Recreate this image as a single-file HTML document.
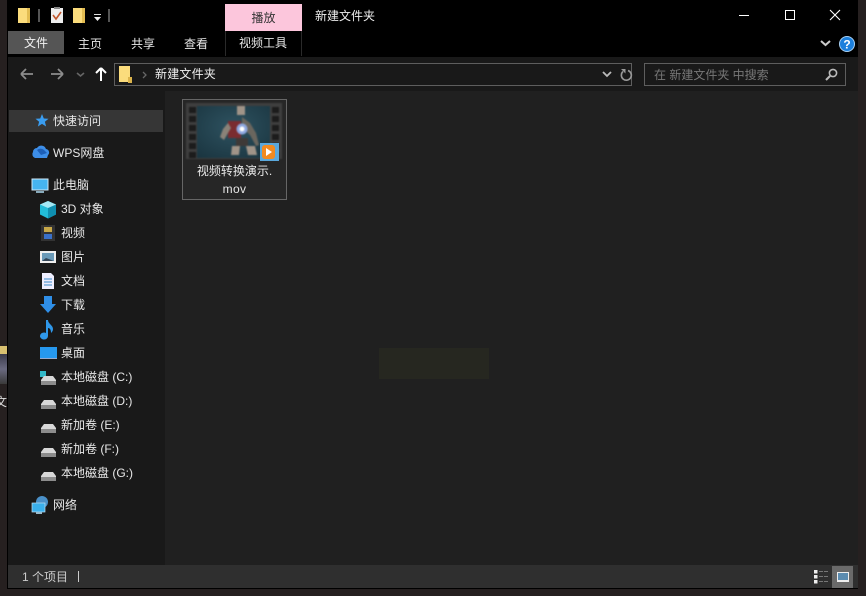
<!DOCTYPE html>
<html lang="zh">
<head>
<meta charset="utf-8">
<style>
html,body{margin:0;padding:0;width:866px;height:596px;overflow:hidden;background:#262020;}
body{position:relative;font-family:"Liberation Sans","Noto Sans CJK SC",sans-serif;font-size:12px;color:#e8e8e8;}
.a{position:absolute;}
.t{position:absolute;white-space:nowrap;line-height:16px;}
svg{position:absolute;overflow:visible;}
</style>
</head>
<body>
<div class="a" style="left:0;top:346px;width:7px;height:8px;background:#d8c070"></div>
<div class="a" style="left:0;top:354px;width:7px;height:30px;background:linear-gradient(#3a3a4a,#6a6a80 50%,#3a3a3a)"></div>
<div class="t" style="left:-5px;top:394px;color:#ddd">文件</div>

<div class="a" style="left:7px;top:0;width:851px;height:589px;background:#000"></div>

<!-- Title bar -->
<svg style="left:0;top:0" width="340" height="56">
<path d="M18 8h11v15h-11z" fill="#fbdc7c"/><path d="M27 8h3v15h-3z" fill="#e3bd52"/>
<rect x="38" y="9" width="2" height="13" fill="#555"/>
<rect x="51" y="8" width="12" height="15" fill="#eee"/><path d="M53 15l3 4 5-7" stroke="#c0562c" stroke-width="1.600" fill="none"/><rect x="54" y="7" width="6" height="2" fill="#888"/>
<path d="M73 8h11v15h-11z" fill="#fbdc7c"/><path d="M82 8h3v15h-3z" fill="#e3bd52"/>
<rect x="94" y="14" width="7" height="1" fill="#ddd"/><path d="M94 17h7l-3.500 4z" fill="#eee"/>
<rect x="108" y="9" width="2" height="13" fill="#555"/>
</svg>
<div class="a" style="left:225px;top:4px;width:77px;height:27px;background:#fcc6dc"></div>
<div class="t" style="left:225px;top:10px;width:77px;text-align:center;color:#333">播放</div>
<div class="t" style="left:315px;top:8px;color:#eee">新建文件夹</div>

<svg style="left:730px;top:5px" width="120" height="22">
<rect x="9" y="10" width="10" height="1" fill="#fff"/>
<rect x="55.500" y="5.500" width="9" height="9" fill="none" stroke="#fff"/>
<path d="M100 5l10 10M110 5l-10 10" stroke="#fff" stroke-width="1.100"/>
</svg>

<!-- Ribbon tabs -->
<div class="a" style="left:8px;top:31px;width:56px;height:23px;background:#555"></div>
<div class="t" style="left:8px;top:35px;width:56px;text-align:center;color:#f2f2f2">文件</div>
<div class="t" style="left:78px;top:36px">主页</div>
<div class="t" style="left:131px;top:36px">共享</div>
<div class="t" style="left:184px;top:36px">查看</div>
<div class="a" style="left:225px;top:31px;width:1px;height:25px;background:#2a2a2a"></div>
<div class="a" style="left:301px;top:31px;width:1px;height:25px;background:#2a2a2a"></div>
<div class="t" style="left:239px;top:35px">视频工具</div>
<svg style="left:815px;top:33px" width="40" height="22">
<path d="M6 8l4.500 4 4.500-4" stroke="#ccc" stroke-width="2" fill="none"/>
<circle cx="32" cy="11" r="7.500" fill="#1c7fdc" stroke="#a8d0f4"/>
<text x="32" y="15.500" font-size="12" font-weight="bold" fill="#fff" text-anchor="middle" font-family="Liberation Sans">?</text>
</svg>

<!-- Toolbar -->
<div class="a" style="left:8px;top:57px;width:850px;height:34px;background:#191919"></div>
<svg style="left:8px;top:57px" width="120" height="34">
<path d="M14 17h12M14 17l5-5M14 17l5 5" stroke="#8c8c8c" stroke-width="1.800" fill="none" transform="translate(-1 0)"/>
<path d="M43 17h12M55 17l-5-5M55 17l-5 5" stroke="#8c8c8c" stroke-width="1.800" fill="none"/>
<path d="M69 16l3.500 3 3.500-3" stroke="#666" stroke-width="1.600" fill="none"/>
<path d="M93 24v-13M93 11l-5 5M93 11l5 5" stroke="#fff" stroke-width="2" fill="none"/>
</svg>
<div class="a" style="left:114px;top:63px;width:518px;height:23px;border:1px solid #5e5e5e;box-sizing:border-box;background:#191919"></div>
<svg style="left:114px;top:63px" width="520" height="23">
<path d="M5 3h11v16h-11z" fill="#fbdc7c"/><path d="M14 14h4v6h-4z" fill="#dcb44c"/>
<path d="M29 9l3 3-3 3" stroke="#666" stroke-width="1.300" fill="none"/>
<path d="M489 9l4 4 4-4" stroke="#bbb" stroke-width="1.800" fill="none"/>
<path d="M514 7.500a5 5 0 1 1-5 1" stroke="#999" stroke-width="1.600" fill="none"/><path d="M507 6h4.500v4.500z" fill="#999"/>
</svg>
<div class="t" style="left:155px;top:66px;color:#eee;letter-spacing:.2px">新建文件夹</div>
<div class="a" style="left:644px;top:63px;width:202px;height:23px;border:1px solid #5e5e5e;box-sizing:border-box;background:#191919"></div>
<div class="t" style="left:654px;top:67px;color:#777">在 新建文件夹 中搜索</div>
<svg style="left:824px;top:67px" width="16" height="16">
<circle cx="9" cy="6" r="3.600" fill="none" stroke="#bbb" stroke-width="1.600"/><path d="M6 9l-4 4" stroke="#bbb" stroke-width="2"/>
</svg>

<!-- Sidebar and content -->
<div class="a" style="left:8px;top:91px;width:157px;height:474px;background:#191919"></div>
<div class="a" style="left:165px;top:91px;width:693px;height:474px;background:#202020"></div>
<div class="a" style="left:379px;top:348px;width:110px;height:31px;background:#262720"></div>
<div class="a" style="left:9px;top:110px;width:154px;height:22px;background:#363636"></div>

<svg style="left:0;top:100px" width="165" height="420">
<path d="M42 14l1.800 4.500 4.700.3-3.600 3 1.200 4.700-4.100-2.600-4.100 2.600 1.200-4.700-3.600-3 4.700-.3z" fill="#3a9df0"/>
<path d="M33 52a4 4 0 0 1 4-4 5 5 0 0 1 9 1 3.500 3.500 0 0 1 2 6l-1 3h-12a4 4 0 0 1-2-6z" fill="#3d8ee8"/>
<path d="M37 50a5 5 0 0 1 7 0l3 3-6 2z" fill="#1c5fb8"/>
<rect x="32" y="79" width="16" height="11" fill="#46b4f0" stroke="#cfe8f8"/><rect x="36" y="91" width="8" height="2" fill="#8ab"/>
<path d="M48 101l8 3.500v10l-8 4-8-4v-10z" fill="#22bcd8"/><path d="M48 108l8-3.500v10l-8 4z" fill="#0f8fb0"/><path d="M48 101l8 3.500-8 3.500-8-3.500z" fill="#a4e8f4"/>
<rect x="41" y="125" width="14" height="16" fill="#333"/><rect x="44" y="127" width="8" height="5" fill="#c8a848"/><rect x="44" y="134" width="8" height="5" fill="#3a70c8"/>
<rect x="40" y="151" width="16" height="12" fill="#eee"/><rect x="42" y="153" width="12" height="8" fill="#6a9ab8"/><path d="M42 161l4-3 8 3z" fill="#345"/>
<path d="M42 173h9l3 3v13h-12z" fill="#eef"/><path d="M44 179h8M44 182h8M44 185h8" stroke="#3a8ac8"/>
<path d="M44 196h8v8h4l-8 9-8-9h4z" fill="#2f8fe8"/>
<path d="M48 220c0 4 5 5 5 9 0 2-1 3-2 4 0-3-1-5-3-5v8a4 3.500 0 1 1-2-3v-13z" fill="#2f98ea"/>
<rect x="40" y="247" width="17" height="11" fill="#2698ee"/><rect x="40" y="258" width="17" height="1" fill="#9ac"/>
<g>
<rect x="40" y="271" width="6" height="6" fill="#32b8c8"/>
<path d="M44 276h9l3 4v5h-15v-5z" fill="#d8d8d8"/><rect x="41" y="281" width="15" height="4" fill="#8c8c8c"/>
<path d="M44 300h9l3 4v5h-15v-5z" fill="#d8d8d8"/><rect x="41" y="305" width="15" height="4" fill="#8c8c8c"/>
<path d="M44 324h9l3 4v5h-15v-5z" fill="#d8d8d8"/><rect x="41" y="329" width="15" height="4" fill="#8c8c8c"/>
<path d="M44 348h9l3 4v5h-15v-5z" fill="#d8d8d8"/><rect x="41" y="353" width="15" height="4" fill="#8c8c8c"/>
<path d="M44 372h9l3 4v5h-15v-5z" fill="#d8d8d8"/><rect x="41" y="377" width="15" height="4" fill="#8c8c8c"/>
</g>
<circle cx="42" cy="402" r="6" fill="#4a90c8"/><rect x="32" y="403" width="13" height="9" fill="#3ab0ec" stroke="#bfe0f4" stroke-width=".7"/><rect x="36" y="412" width="6" height="2" fill="#9bc"/>
</svg>

<div class="t" style="left:53px;top:113px">快速访问</div>
<div class="t" style="left:53px;top:145px">WPS网盘</div>
<div class="t" style="left:53px;top:177px">此电脑</div>
<div class="t" style="left:61px;top:201px">3D 对象</div>
<div class="t" style="left:61px;top:225px">视频</div>
<div class="t" style="left:61px;top:249px">图片</div>
<div class="t" style="left:61px;top:273px">文档</div>
<div class="t" style="left:61px;top:297px">下载</div>
<div class="t" style="left:61px;top:321px">音乐</div>
<div class="t" style="left:61px;top:345px">桌面</div>
<div class="t" style="left:61px;top:369px">本地磁盘 (C:)</div>
<div class="t" style="left:61px;top:393px">本地磁盘 (D:)</div>
<div class="t" style="left:61px;top:417px">新加卷 (E:)</div>
<div class="t" style="left:61px;top:441px">新加卷 (F:)</div>
<div class="t" style="left:61px;top:465px">本地磁盘 (G:)</div>
<div class="t" style="left:53px;top:497px">网络</div>

<!-- File item -->
<div class="a" style="left:182px;top:99px;width:105px;height:101px;border:1px solid #666;box-sizing:border-box;background:#262626"></div>
<svg style="left:186px;top:103px;filter:blur(.7px)" width="96" height="60">
<defs>
<radialGradient id="g" cx="50%" cy="40%" r="75%"><stop offset="0" stop-color="#2e5260"/><stop offset="1" stop-color="#1a3540"/></radialGradient>
</defs>
<rect x="0" y="0" width="96" height="56" fill="#3e3e3e"/>
<rect x="11" y="3" width="73" height="52" fill="url(#g)"/>
<g fill="#1c1c1c">
<rect x="3" y="4" width="7" height="6"/><rect x="3" y="13" width="7" height="6"/><rect x="3" y="22" width="7" height="6"/><rect x="3" y="31" width="7" height="6"/><rect x="3" y="40" width="7" height="6"/><rect x="3" y="49" width="7" height="6"/>
<rect x="86" y="4" width="7" height="6"/><rect x="86" y="13" width="7" height="6"/><rect x="86" y="22" width="7" height="6"/><rect x="86" y="31" width="7" height="6"/><rect x="86" y="40" width="7" height="6"/><rect x="86" y="49" width="7" height="6"/>
</g>
<rect x="51" y="3" width="8" height="9" fill="#a09488"/>
<path d="M42 18h13v17h-13z" fill="#7a2c30"/>
<path d="M56 14l8 6 6 10 3 12-3 1-6-11-8-8z" fill="#6a665e"/>
<path d="M42 20l-5 6-3 8 4 3 4-7 3-5z" fill="#8a8278"/>
<circle cx="56" cy="26" r="5.500" fill="#8fa8e0"/><circle cx="56" cy="26" r="2.500" fill="#fff"/>
<path d="M46 43h8l-1 9h-8zM60 43h9l2 9h-9z" fill="#a09488"/>
<path d="M50 35h12v8h-12z" fill="#3e3a38"/>
</svg>
<svg style="left:260px;top:143px" width="20" height="18">
<rect x="0" y="0" width="19" height="18" fill="#5aa8dc"/>
<rect x="2" y="2" width="13" height="14" rx="3" fill="#f28a20"/><path d="M6 5v8l6-4z" fill="#fff"/>
</svg>
<div class="t" style="left:182px;top:163px;width:105px;text-align:center">视频转换演示.</div>
<div class="t" style="left:182px;top:181px;width:105px;text-align:center;letter-spacing:.4px">mov</div>

<!-- Status bar -->
<div class="a" style="left:8px;top:565px;width:850px;height:23px;background:#2f2f2f"></div>
<div class="t" style="left:22px;top:569px;color:#ccc">1 个项目</div>
<div class="a" style="left:78px;top:571px;width:1px;height:11px;background:#ccc"></div>
<svg style="left:812px;top:566px" width="44" height="22">
<rect x="2" y="4" width="3.500" height="3.500" fill="#eee"/><rect x="2" y="9" width="3.500" height="3.500" fill="#eee"/><rect x="2" y="14" width="3.500" height="3.500" fill="#eee"/>
<path d="M7 5.500h4M12 5.500h4M7 10.500h4M12 10.500h4M7 15.500h4M12 15.500h4" stroke="#777"/>
<rect x="20" y="0" width="21" height="22" fill="#6a6a6a"/>
<rect x="25" y="6" width="12" height="10" fill="#eee"/><rect x="26" y="7" width="10" height="7" fill="#5c8cb0"/>
</svg>
</body>
</html>
